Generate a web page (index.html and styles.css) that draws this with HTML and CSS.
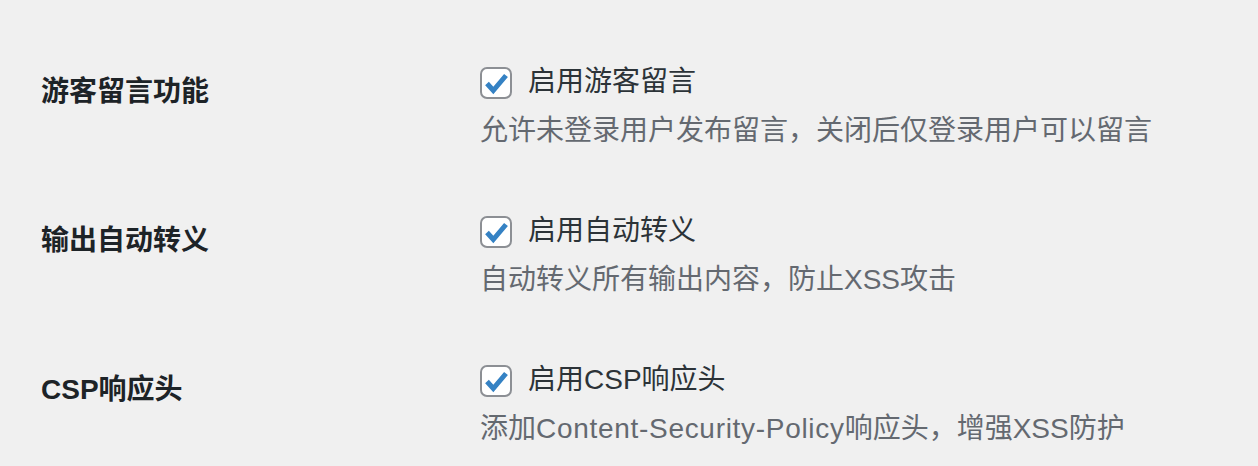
FILE: index.html
```html
<!DOCTYPE html>
<html lang="zh-CN">
<head>
<meta charset="utf-8">
<title>设置</title>
<link rel="stylesheet" href="styles.css">
</head>
<body>
<div class="form-table">
  <div class="row">
    <div class="label">游客留言功能</div>
    <div class="field">
      <label class="check">
        <span class="box"><svg viewBox="0 0 32 32" width="32" height="32"><path d="M7 16.5 L13.3 23.5 L26 8.5" fill="none" stroke="#3582c4" stroke-width="5" stroke-linecap="butt" stroke-linejoin="miter"/></svg></span>
        <span class="check-text">启用游客留言</span>
      </label>
      <p class="description">允许未登录用户发布留言，关闭后仅登录用户可以留言</p>
    </div>
  </div>
  <div class="row">
    <div class="label">输出自动转义</div>
    <div class="field">
      <label class="check">
        <span class="box"><svg viewBox="0 0 32 32" width="32" height="32"><path d="M7 16.5 L13.3 23.5 L26 8.5" fill="none" stroke="#3582c4" stroke-width="5" stroke-linecap="butt" stroke-linejoin="miter"/></svg></span>
        <span class="check-text">启用自动转义</span>
      </label>
      <p class="description">自动转义所有输出内容，防止XSS攻击</p>
    </div>
  </div>
  <div class="row">
    <div class="label">CSP响应头</div>
    <div class="field">
      <label class="check">
        <span class="box"><svg viewBox="0 0 32 32" width="32" height="32"><path d="M7 16.5 L13.3 23.5 L26 8.5" fill="none" stroke="#3582c4" stroke-width="5" stroke-linecap="butt" stroke-linejoin="miter"/></svg></span>
        <span class="check-text">启用CSP响应头</span>
      </label>
      <p class="description">添加<span class="en">Content-Security-Policy</span>响应头，增强XSS防护</p>
    </div>
  </div>
</div>
</body>
</html>
```
FILE: styles.css
```css
html, body {
  margin: 0;
  padding: 0;
  background: #f0f0f0;
}
body {
  font-family: "Liberation Sans", "Noto Sans CJK SC", sans-serif;
  font-size: 28px;
  line-height: 40px;
  color: #2c3338;
}
.form-table {
  padding: 32px 0 0 41px;
  display: flex;
  flex-direction: column;
}
.row {
  display: grid;
  grid-template-columns: 439px 1fr;
  padding: 30px 0 30px 0;
}
.label {
  margin-top: 10px;
  font-weight: 700;
  color: #1d2327;
}
.field {
  display: flex;
  flex-direction: column;
}
.check {
  display: flex;
  align-items: center;
  gap: 16px;
  height: 40px;
}
.box {
  box-sizing: border-box;
  width: 32px;
  height: 32px;
  margin-top: 2px;
  border: 2px solid #8c8f94;
  border-radius: 7px;
  background: #fff;
  position: relative;
  overflow: hidden;
}
.box svg {
  position: absolute;
  left: -2px;
  top: -2px;
}
.check-text {
  color: #2c3338;
}
.description {
  margin: 9px 0 0 0;
  color: #646970;
}
.en {
  letter-spacing: 0.7px;
}
```
